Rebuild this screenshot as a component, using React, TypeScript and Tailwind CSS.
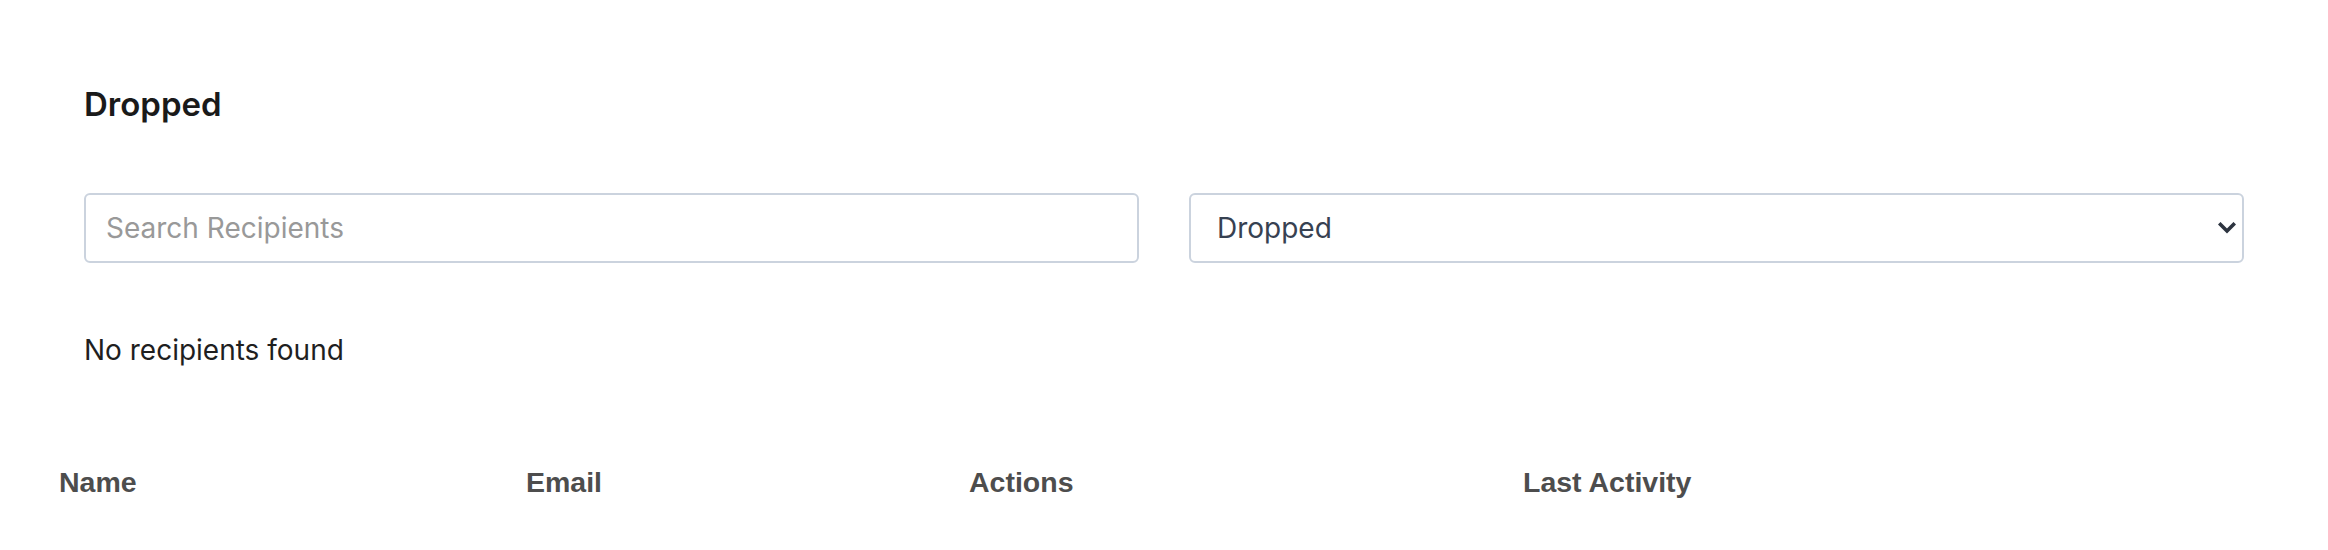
import React from "react";

const inter = { fontFamily: '"Inter", "Noto Sans", sans-serif' };

function Chevron() {
  return (
    <svg
      width="18"
      height="12"
      viewBox="0 0 18 12"
      className="pointer-events-none absolute right-[8px] top-1/2 -translate-y-1/2"
    >
      <path
        d="M2.5 2.5 L9 9 L15.5 2.5"
        fill="none"
        stroke="#2d3440"
        strokeWidth="3.6"
        strokeLinecap="square"
      />
    </svg>
  );
}

export default function App() {
  const columns = ["Name", "Email", "Actions", "Last Activity"];
  return (
    <div className="min-h-[550px] w-full bg-white" style={inter}>
      <div className="px-[84px] pt-[86px]">
        <h2 className="text-[33px] font-semibold leading-[36px] text-[#1a1a1a]">
          Dropped
        </h2>

        <div className="mt-[71px] grid grid-cols-2 gap-[50px]">
          <input
            type="text"
            placeholder="Search Recipients"
            className="h-[70px] w-full rounded-[6px] border-[2px] border-[#cbd3de] bg-white px-[20px] text-[28px] text-[#374151] outline-none placeholder:text-[#999999]"
            style={inter}
          />
          <div className="relative">
            <select
              defaultValue="Dropped"
              className="h-[70px] w-full appearance-none rounded-[6px] border-[2px] border-[#cbd3de] bg-white pl-[26px] pr-[40px] text-[28px] text-[#374151] outline-none"
              style={inter}
            >
              <option>All</option>
              <option>Delivered</option>
              <option>Opened</option>
              <option>Clicked</option>
              <option>Bounced</option>
              <option>Dropped</option>
            </select>
            <Chevron />
          </div>
        </div>

        <p className="mt-[69px] text-[28px] leading-[36px] text-[#1f1f1f]">
          No recipients found
        </p>
      </div>

      <div className="mt-[96px] pl-[59px]">
        <div
          className="grid grid-cols-[467px_443px_554px_1fr] text-[28.5px] font-bold leading-[36px] text-[#4d4d4d]"
          style={{ fontFamily: '"Liberation Sans", Arial, sans-serif' }}
        >
          {columns.map((c) => (
            <div key={c}>{c}</div>
          ))}
        </div>
      </div>
    </div>
  );
}
